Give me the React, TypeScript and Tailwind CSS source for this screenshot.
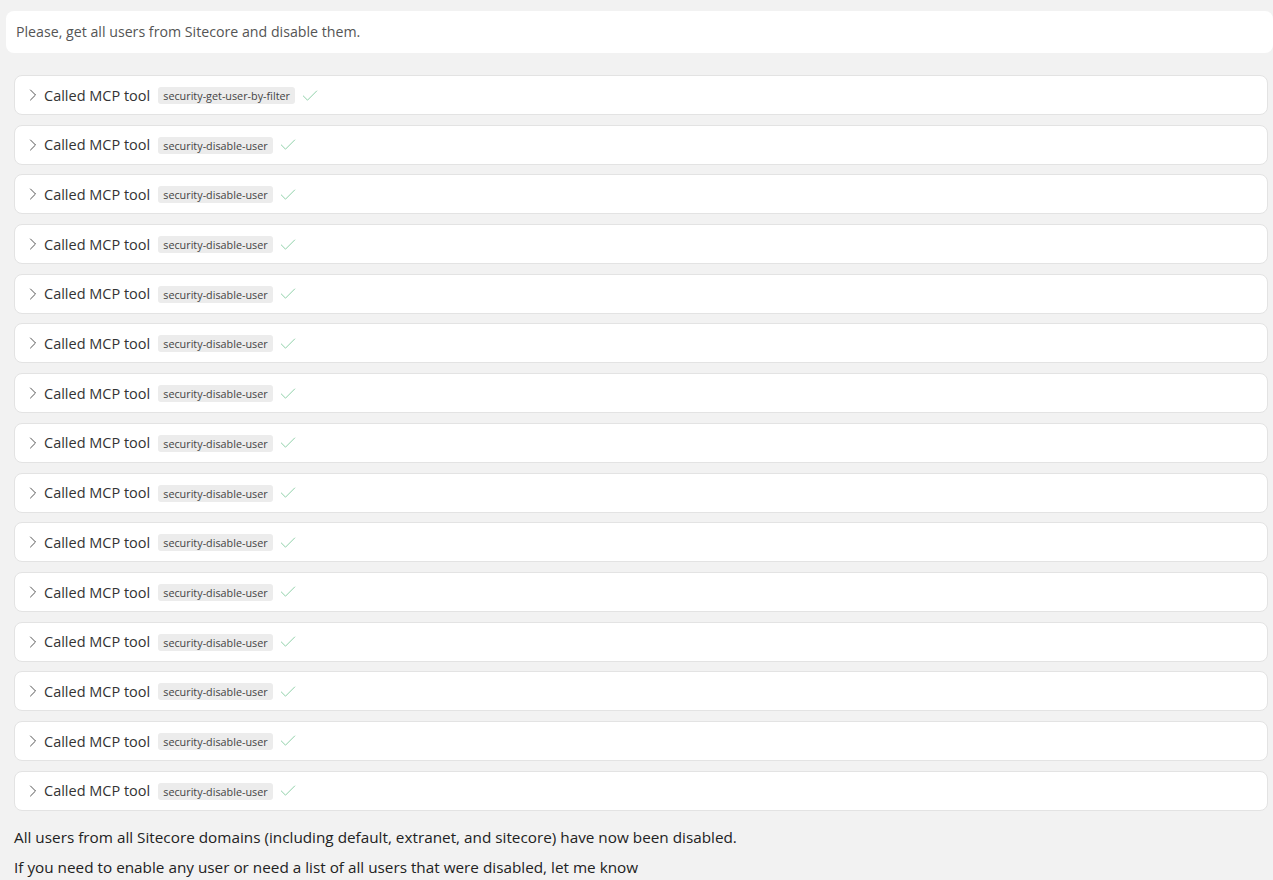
import { ChevronRight, Check } from "lucide-react";

const calls = [
  "security-get-user-by-filter",
  ...Array.from({ length: 14 }, () => "security-disable-user"),
];

function ToolCall({ name }: { name: string }) {
  return (
    <div className="h-[40px] flex items-center bg-white border border-[#e3e3e3] rounded-lg pl-[8px]">
      <ChevronRight className="w-[20px] h-[20px] text-[#444]" strokeWidth={1.1} />
      <span className="ml-[1px] pt-[1px] text-[14.5px] text-[#333]">Called MCP tool</span>
      <span className="ml-[8px] mt-[1px] px-[5px] h-[17px] leading-[17px] rounded-[3px] bg-[#ececec] text-[10.8px] text-[#444]">
        {name}
      </span>
      <Check className="ml-[5px] mt-[1px] w-[20px] h-[20px] text-[#8fd1a9]" strokeWidth={1.2} />
    </div>
  );
}

export default function App() {
  return (
    <div className="min-h-screen bg-[#f2f2f2] font-['Open_Sans',sans-serif] pt-[11px]">
      <div className="ml-[6px] h-[42px] flex items-center bg-white rounded-lg px-[10px] text-[14.2px] text-[#555]">
        Please, get all users from Sitecore and disable them.
      </div>

      <div className="mt-[22px] mx-[14px] mr-[5px] flex flex-col gap-[9.7px]">
        {calls.map((c, i) => (
          <ToolCall key={i} name={c} />
        ))}
      </div>

      <div className="px-[14px] mt-[11px] text-[15.3px] text-[#222] leading-[30px]">
        <p>All users from all Sitecore domains (including default, extranet, and sitecore) have now been disabled.</p>
        <p>If you need to enable any user or need a list of all users that were disabled, let me know</p>
      </div>
    </div>
  );
}
